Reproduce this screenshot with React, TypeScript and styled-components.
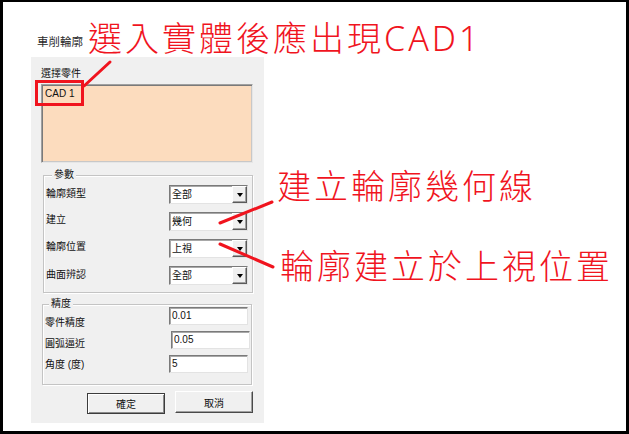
import React from 'react';
import styled, { createGlobalStyle } from 'styled-components';

const GlobalStyle = createGlobalStyle`
  html, body {
    margin: 0;
    padding: 0;
    background: #ffffff;
  }
`;

const Page = styled.div`
  position: relative;
  width: 629px;
  height: 434px;
  overflow: hidden;
`;

const Frame = styled.div`
  box-sizing: border-box;
  width: 629px;
  height: 434px;
  border: solid #000;
  border-width: 2px 3px 3px 3px;
  background: #ffffff;
  padding: 33px 0 0 28px;
  font-family: 'Liberation Sans', 'Noto Sans CJK TC', sans-serif;
  color: #111;
`;

const Dialog = styled.div`
  display: flex;
  flex-direction: column;
  width: 233px;
`;

const DialogTitle = styled.div`
  margin: 0 0 8px 6px;
  height: 14px;
  line-height: 14px;
  font-size: 11.5px;
  color: #2a2a2a;
`;

const Panel = styled.div`
  box-sizing: border-box;
  height: 366px;
  background: #f0f0f0;
  padding: 10px 11px 0 10px;
  display: flex;
  flex-direction: column;
`;

const FieldLabel = styled.div`
  font-size: 10px;
  line-height: 13px;
  height: 13px;
  white-space: nowrap;
`;

const ListBox = styled.div`
  box-sizing: border-box;
  margin-top: 4px;
  height: 79px;
  background: #fcdcbe;
  border: 1px solid;
  border-color: #a0a0a0 #e6e6e6 #e6e6e6 #a0a0a0;
  box-shadow: inset 1px 1px 0 #7a7a7a, inset -1px -1px 0 #c8c8c8;
  padding: 2px 3px;
`;

const ListItem = styled.div`
  font-size: 10px;
  line-height: 13px;
`;

const GroupBox = styled.div<{ $gap: number; $indent: number; $padRight: number; $padBottom: number }>`
  box-sizing: border-box;
  margin: ${({ $gap }) => $gap}px 0 0 ${({ $indent }) => $indent}px;
  width: 210px;
  border: 1px solid #c4c4c4;
  box-shadow: 1px 1px 0 #ffffff, inset 1px 1px 0 #ffffff;
  padding: 0 ${({ $padRight }) => $padRight}px ${({ $padBottom }) => $padBottom}px 2px;
`;

const GroupTitle = styled.div<{ $inset: number }>`
  margin: -7px 0 0 ${({ $inset }) => $inset}px;
  width: fit-content;
  height: 12px;
  line-height: 12px;
  padding: 0 2px;
  background: #f0f0f0;
  font-size: 10px;
`;

const Rows = styled.div<{ $top: number; $gap: number }>`
  display: flex;
  flex-direction: column;
  gap: ${({ $gap }) => $gap}px;
  margin-top: ${({ $top }) => $top}px;
`;

const Row = styled.div<{ $height: number }>`
  display: grid;
  grid-template-columns: 1fr 79px;
  align-items: start;
  height: ${({ $height }) => $height}px;
`;

const RowLabel = styled.div<{ $drop: number }>`
  font-size: 10px;
  line-height: 13px;
  padding-top: ${({ $drop }) => $drop}px;
  white-space: nowrap;
`;

const ComboBox = styled.div`
  box-sizing: border-box;
  display: flex;
  height: 19px;
  background: #ffffff;
  border: 1px solid;
  border-color: #7a7a7a #e3e3e3 #e3e3e3 #7a7a7a;
  box-shadow: inset 1px 1px 0 #a8a8a8;
`;

const ComboText = styled.div`
  flex: 1;
  padding-left: 2px;
  font-size: 10px;
  line-height: 17px;
`;

const ComboButton = styled.div`
  box-sizing: border-box;
  width: 15px;
  display: flex;
  align-items: center;
  justify-content: center;
  background: #f0f0f0;
  border: 1px solid;
  border-color: #ffffff #5a5a5a #5a5a5a #ffffff;
  box-shadow: inset -1px -1px 0 #a0a0a0;
`;

const Arrow = styled.div`
  width: 0;
  height: 0;
  border-left: 3.5px solid transparent;
  border-right: 3.5px solid transparent;
  border-top: 4px solid #000;
`;

const TextField = styled.div<{ $nudge?: number }>`
  box-sizing: border-box;
  height: 18px;
  margin-left: ${({ $nudge }) => $nudge ?? 0}px;
  margin-right: ${({ $nudge }) => -($nudge ?? 0)}px;
  background: #ffffff;
  border: 1px solid;
  border-color: #7a7a7a #e3e3e3 #e3e3e3 #7a7a7a;
  box-shadow: inset 1px 1px 0 #a8a8a8;
  padding-left: 2px;
  font-size: 10px;
  line-height: 16px;
`;

const ButtonRow = styled.div`
  display: flex;
  align-items: flex-start;
  gap: 10px;
  margin-top: 6px;
  padding-left: 46px;
`;

const DialogButton = styled.div<{ $primary?: boolean }>`
  box-sizing: border-box;
  width: 80px;
  height: ${({ $primary }) => ($primary ? 21 : 22)}px;
  margin-top: ${({ $primary }) => ($primary ? 2 : 0)}px;
  display: flex;
  align-items: center;
  justify-content: center;
  font-size: 10px;
  background: #f0f0f0;
  border: 1px solid;
  border-color: ${({ $primary }) =>
    $primary ? '#3c3c3c' : '#ffffff #4a4a4a #4a4a4a #ffffff'};
  box-shadow: ${({ $primary }) =>
    $primary
      ? 'inset 1px 1px 0 #ffffff, inset -1px -1px 0 #8a8a8a'
      : 'inset -1px -1px 0 #a0a0a0'};
`;

const Overlay = styled.svg`
  position: absolute;
  left: 0;
  top: 0;
  pointer-events: none;
`;

const Callout = styled.div<{ $x: number; $y: number }>`
  position: absolute;
  left: ${({ $x }) => $x}px;
  top: ${({ $y }) => $y}px;
  font-family: 'Noto Sans', 'Noto Sans CJK TC', sans-serif;
  font-size: 34px;
  font-weight: 300;
  line-height: 34px;
  letter-spacing: 3px;
  color: #f0141e;
  white-space: nowrap;
`;

const params = [
  { label: '輪廓類型', value: '全部', drop: 2 },
  { label: '建立', value: '幾何', drop: 1 },
  { label: '輪廓位置', value: '上視', drop: 1 },
  { label: '曲面辨認', value: '全部', drop: 2 },
];

const precision = [
  { label: '零件精度', value: '0.01', drop: 9, nudge: 0 },
  { label: '圓弧逼近', value: '0.05', drop: 6, nudge: 2 },
  { label: '角度 (度)', value: '5', drop: 3, nudge: 0 },
];

export default function App() {
  return (
    <>
      <GlobalStyle />
      <Page>
        <Frame>
          <Dialog>
            <DialogTitle>車削輪廓</DialogTitle>
            <Panel>
              <FieldLabel>選擇零件</FieldLabel>
              <ListBox>
                <ListItem>CAD 1</ListItem>
              </ListBox>

              <GroupBox $gap={12} $indent={2} $padRight={4} $padBottom={7}>
                <GroupTitle $inset={6}>參數</GroupTitle>
                <Rows $top={4} $gap={8}>
                  {params.map((p) => (
                    <Row key={p.label} $height={19}>
                      <RowLabel $drop={p.drop}>{p.label}</RowLabel>
                      <ComboBox>
                        <ComboText>{p.value}</ComboText>
                        <ComboButton>
                          <Arrow />
                        </ComboButton>
                      </ComboBox>
                    </Row>
                  ))}
                </Rows>
              </GroupBox>

              <GroupBox $gap={11} $indent={1} $padRight={3} $padBottom={11}>
                <GroupTitle $inset={4}>精度</GroupTitle>
                <Rows $top={-3} $gap={6}>
                  {precision.map((p) => (
                    <Row key={p.label} $height={18}>
                      <RowLabel $drop={p.drop}>{p.label}</RowLabel>
                      <TextField $nudge={p.nudge}>{p.value}</TextField>
                    </Row>
                  ))}
                </Rows>
              </GroupBox>

              <ButtonRow>
                <DialogButton $primary>確定</DialogButton>
                <DialogButton>取消</DialogButton>
              </ButtonRow>
            </Panel>
          </Dialog>
        </Frame>

        <Overlay width={629} height={434} viewBox="0 0 629 434">
          <rect x={36.5} y={81.5} width={46} height={23} fill="none" stroke="#f0141e" strokeWidth={3} />
          <line x1={84} y1={86} x2={110} y2={62} stroke="#f0141e" strokeWidth={3} strokeLinecap="round" />
          <line x1={220} y1={223} x2={272} y2={202} stroke="#f0141e" strokeWidth={3} strokeLinecap="round" />
          <line x1={220} y1={244} x2={273} y2={267} stroke="#f0141e" strokeWidth={3} strokeLinecap="round" />
        </Overlay>

        <Callout $x={88} $y={21}>選入實體後應出現CAD1</Callout>
        <Callout $x={277} $y={169}>建立輪廓幾何線</Callout>
        <Callout $x={280} $y={249}>輪廓建立於上視位置</Callout>
      </Page>
    </>
  );
}
